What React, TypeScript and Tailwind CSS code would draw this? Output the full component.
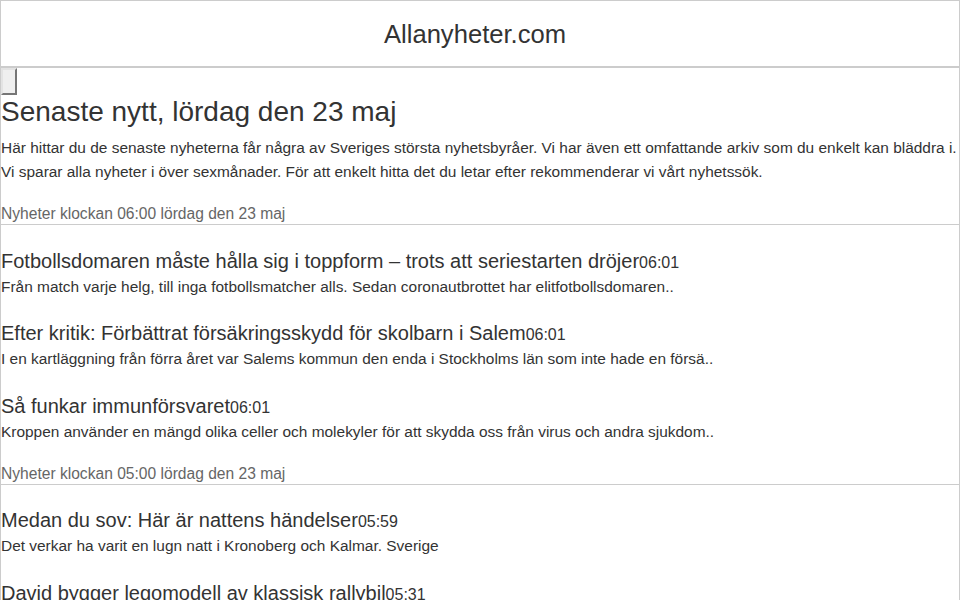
import React from "react";

type Article = { title: string; time: string; desc: string };
type Group = { label: string; articles: Article[] };

const groups: Group[] = [
  {
    label: "Nyheter klockan 06:00 lördag den 23 maj",
    articles: [
      {
        title: "Fotbollsdomaren måste hålla sig i toppform – trots att seriestarten dröjer",
        time: "06:01",
        desc: "Från match varje helg, till inga fotbollsmatcher alls. Sedan coronautbrottet har elitfotbollsdomaren..",
      },
      {
        title: "Efter kritik: Förbättrat försäkringsskydd för skolbarn i Salem",
        time: "06:01",
        desc: "I en kartläggning från förra året var Salems kommun den enda i Stockholms län som inte hade en försä..",
      },
      {
        title: "Så funkar immunförsvaret",
        time: "06:01",
        desc: "Kroppen använder en mängd olika celler och molekyler för att skydda oss från virus och andra sjukdom..",
      },
    ],
  },
  {
    label: "Nyheter klockan 05:00 lördag den 23 maj",
    articles: [
      {
        title: "Medan du sov: Här är nattens händelser",
        time: "05:59",
        desc: "Det verkar ha varit en lugn natt i Kronoberg och Kalmar. Sverige",
      },
      {
        title: "David bygger legomodell av klassisk rallybil",
        time: "05:31",
        desc: "David Nilsson har byggt en legomodell av en klassisk rallybil från sjuttiotalet..",
      },
    ],
  },
];

export default function App() {
  return (
    <div className="h-[600px] overflow-hidden border-x border-[#cccccc] bg-white font-['Liberation_Sans',Arial,sans-serif] text-[#333333]">
      <header className="flex h-[68px] items-center justify-center border-t border-b-2 border-[#cccccc] pt-[1px] pr-[10px]">
        <span className="text-[25.6px] leading-[30px] text-[#333333]">Allanyheter.com</span>
      </header>
      <button
        type="button"
        className="block h-[27px] w-[16px] border-2 border-t-[#e3e3e3] border-l-[#e3e3e3] border-r-[#767676] border-b-[#767676] bg-[#efefef]"
        aria-label="meny"
      ></button>
      <h1 className="mt-[1px] text-[28px] leading-[32px] font-normal">Senaste nytt, lördag den 23 maj</h1>
      <p className="mt-[8px] text-[15.45px] leading-[24px]">
        Här hittar du de senaste nyheterna får några av Sveriges största nyhetsbyråer. Vi har även ett omfattande arkiv som du enkelt kan bläddra i.
        Vi sparar alla nyheter i över sexmånader. För att enkelt hitta det du letar efter rekommenderar vi vårt nyhetssök.
      </p>
      {groups.map((g, gi) => (
        <section key={gi}>
          <div className="mt-[20px] border-b border-[#cccccc] text-[15.6px] leading-[20px] text-[#666666]">
            {g.label}
          </div>
          {g.articles.map((a, ai) => (
            <article key={ai} className={ai === 0 ? "mt-[22.5px]" : "mt-[21.5px]"}>
              <h2 className="text-[20px] leading-[26px] font-normal">
                {a.title}
                <span className="text-[16px] leading-none">{a.time}</span>
              </h2>
              <p className="mt-[1px] text-[15.45px] leading-[24px]">{a.desc}</p>
            </article>
          ))}
        </section>
      ))}
    </div>
  );
}
